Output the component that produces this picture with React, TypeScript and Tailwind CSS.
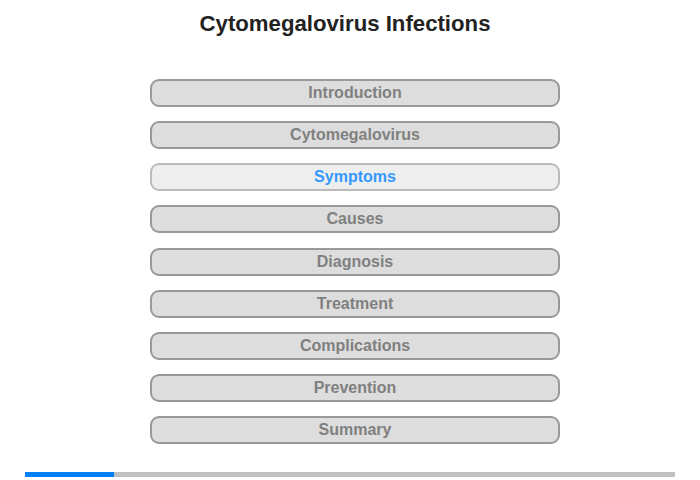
const items = [
  "Introduction",
  "Cytomegalovirus",
  "Symptoms",
  "Causes",
  "Diagnosis",
  "Treatment",
  "Complications",
  "Prevention",
  "Summary",
];

const active = "Symptoms";

export default function App() {
  return (
    <div className="w-[700px] h-[480px] bg-white font-[Liberation_Sans,Arial,sans-serif] flex flex-col items-center">
      <h1 className="mt-[11px] mr-[10px] text-[22.2px] leading-[26px] font-bold text-[#222]">
        Cytomegalovirus Infections
      </h1>
      <div className="mt-[42px] ml-[10px] flex flex-col gap-[14.15px]">
        {items.map(item =>
          item === active ? (
            <div
              key={item}
              className="w-[410px] h-[28px] rounded-[9px] border-2 border-[#bbbbbb] bg-[#eeeeee] flex items-center justify-center text-[16px] font-bold text-[#3399ff]"
            >
              {item}
            </div>
          ) : (
            <div
              key={item}
              className="w-[410px] h-[28px] rounded-[9px] border-2 border-[#999999] bg-[#dddddd] flex items-center justify-center text-[16px] font-bold text-[#808080]"
            >
              {item}
            </div>
          )
        )}
      </div>
      <div className="mt-[28px] w-[650px] h-[5px] bg-[#c0c0c0] flex">
        <div className="w-[89px] h-full bg-[#0080ff]"></div>
      </div>
    </div>
  );
}
